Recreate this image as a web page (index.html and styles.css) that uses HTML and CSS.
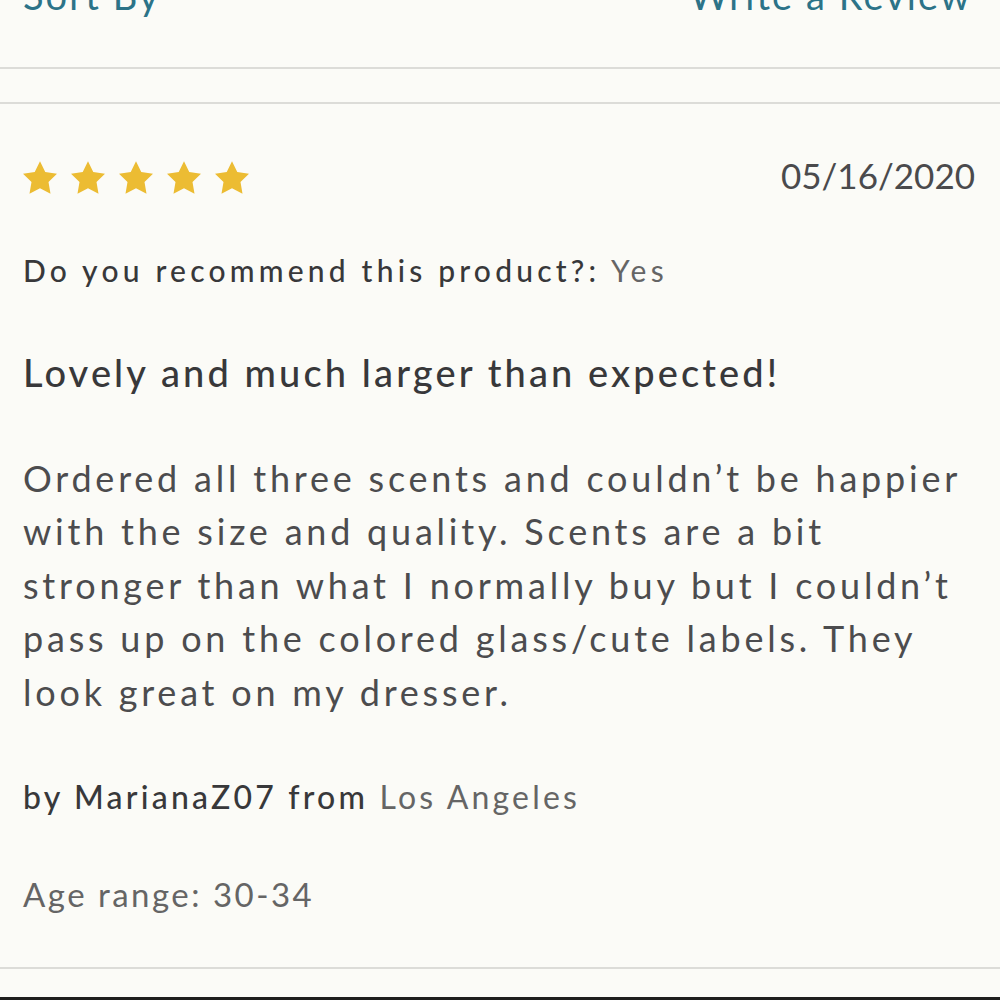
FILE: index.html
```html
<!DOCTYPE html>
<html lang="en">
<head>
<meta charset="utf-8">
<title>Review</title>
<link rel="stylesheet" href="styles.css">
</head>
<body>
<div class="page">
  <div class="toolbar">
    <span class="link">Sort By</span>
    <span class="link">Write a Review</span>
  </div>
  <div class="spacer"></div>
  <article class="review">
    <div class="review-head">
      <div class="stars" aria-label="5 out of 5 stars">
        <svg class="star" viewBox="2 2 20 19.02"><polygon points="12 2 15.09 8.26 22 9.27 17 14.14 18.18 21.02 12 17.77 5.82 21.02 7 14.14 2 9.27 8.91 8.26"/></svg>
        <svg class="star" viewBox="2 2 20 19.02"><polygon points="12 2 15.09 8.26 22 9.27 17 14.14 18.18 21.02 12 17.77 5.82 21.02 7 14.14 2 9.27 8.91 8.26"/></svg>
        <svg class="star" viewBox="2 2 20 19.02"><polygon points="12 2 15.09 8.26 22 9.27 17 14.14 18.18 21.02 12 17.77 5.82 21.02 7 14.14 2 9.27 8.91 8.26"/></svg>
        <svg class="star" viewBox="2 2 20 19.02"><polygon points="12 2 15.09 8.26 22 9.27 17 14.14 18.18 21.02 12 17.77 5.82 21.02 7 14.14 2 9.27 8.91 8.26"/></svg>
        <svg class="star" viewBox="2 2 20 19.02"><polygon points="12 2 15.09 8.26 22 9.27 17 14.14 18.18 21.02 12 17.77 5.82 21.02 7 14.14 2 9.27 8.91 8.26"/></svg>
      </div>
      <span class="date">05/16/2020</span>
    </div>
    <p class="recommend"><span class="label">Do you recommend this product?:</span> <span class="value">Yes</span></p>
    <h2 class="title">Lovely and much larger than expected!</h2>
    <p class="body">Ordered all three scents and couldn’t be happier<br>
    with the size and quality. Scents are a bit<br>
    stronger than what I normally buy but I couldn’t<br>
    pass up on the colored glass/cute labels. They<br>
    look great on my dresser.</p>
    <p class="author"><span class="label">by MarianaZ07 from</span> <span class="value">Los Angeles</span></p>
    <p class="age">Age range: 30-34</p>
  </article>
  <div class="next"></div>
</div>
</body>
</html>
```

FILE: styles.css
```css
* { box-sizing: border-box; }

html, body {
  margin: 0;
  padding: 0;
  background: #fbfbf7;
}

body {
  font-family: Lato, "Open Sans", sans-serif;
  color: #38383a;
  overflow: hidden;
}

.page {
  width: 1000px;
  height: 1000px;
  overflow: hidden;
}

.toolbar {
  display: flex;
  justify-content: space-between;
  margin-top: -25px;
  padding: 0 28px 52px 23px;
  border-bottom: 2px solid #dcdcd8;
}

.link {
  font-size: 38px;
  line-height: 40px;
  color: #2c7388;
  letter-spacing: 0.055em;
}

.spacer {
  height: 35px;
  border-bottom: 2px solid #dcdcd8;
}

.review {
  padding: 53px 25px 53px 23px;
  border-bottom: 2px solid #dcdcd8;
}

.review-head {
  display: flex;
  justify-content: space-between;
  align-items: flex-start;
}

.stars {
  display: flex;
  gap: 14px;
  margin-top: 4px;
}

.star {
  width: 34px;
  height: 33px;
  fill: #ecbc33;
}

.date {
  font-size: 35px;
  line-height: 36px;
  color: #4a4a4c;
}

.review p, .review h2 {
  margin: 0;
}

.recommend {
  margin-top: 56px !important;
  font-size: 30px;
  line-height: 40px;
  letter-spacing: 0.14em;
}

.recommend .label, .author .label {
  font-weight: 500;
  color: #38383a;
}

.recommend .value, .author .value {
  color: #656565;
}

.title {
  margin-top: 60px !important;
  font-size: 38px;
  line-height: 44px;
  font-weight: 500;
  color: #38383a;
  letter-spacing: 0.082em;
}

.body {
  margin-top: 58px !important;
  font-size: 36px;
  line-height: 53.4px;
  color: #4c4c4e;
  letter-spacing: 0.105em;
  white-space: nowrap;
}

.author {
  margin-top: 58px !important;
  font-size: 32px;
  line-height: 40px;
  letter-spacing: 0.1em;
}

.age {
  margin-top: 57px !important;
  font-size: 33px;
  line-height: 40px;
  color: #656565;
  letter-spacing: 0.075em;
}

.next {
  margin-top: 28px;
  border-top: 3px solid #1e1e1e;
}
```
